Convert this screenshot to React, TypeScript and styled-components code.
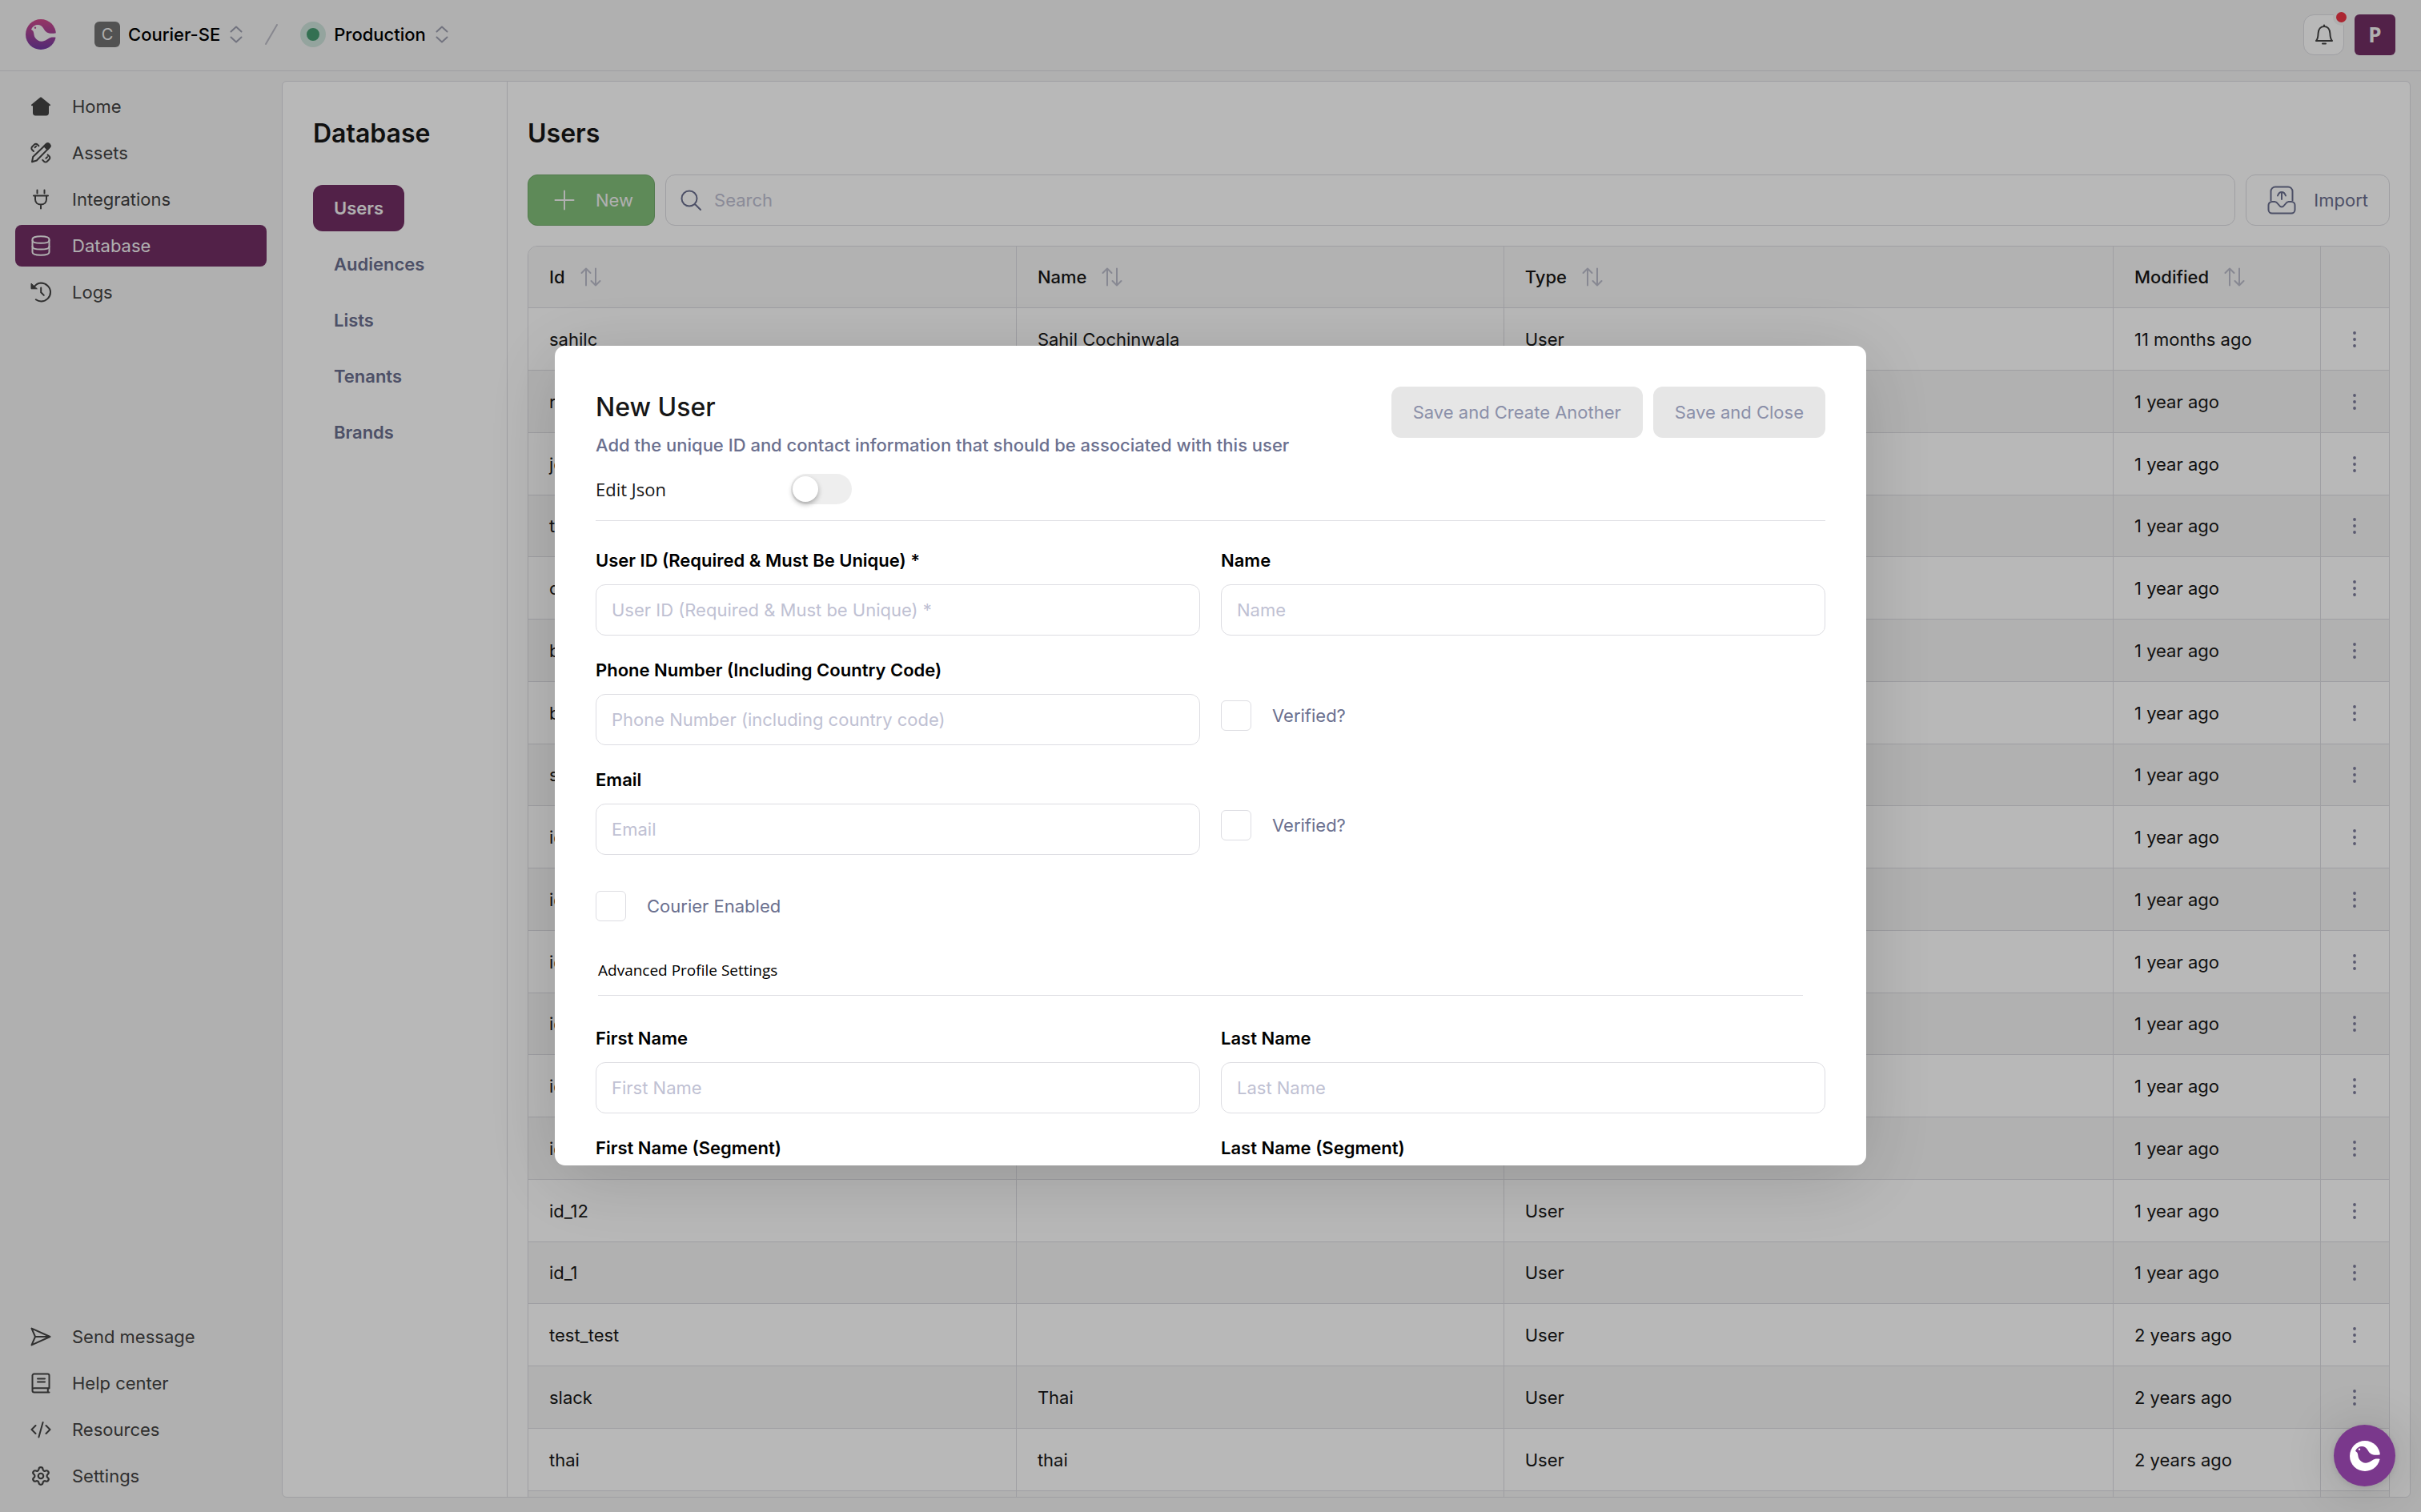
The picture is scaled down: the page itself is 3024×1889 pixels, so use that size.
import React, { useId } from "react";
import styled, { createGlobalStyle, css } from "styled-components";
import { Settings } from "lucide-react";

const color = {
  page: "#f4f4f4",
  surface: "#ffffff",
  stripe: "#f7f7f7",
  line: "#dddde2",
  ink: "#171717",
  menu: "#434343",
  muted: "#6b708f",
  placeholder: "#bfc1d3",
  brand: "#722e65",
  green: "#83bf7b",
};

const GlobalStyle = createGlobalStyle`
  *, *::before, *::after { box-sizing: border-box; }
  body {
    margin: 0;
    background: ${color.page};
    color: ${color.ink};
    font-family: Inter, "Liberation Sans", sans-serif;
    font-size: 22px;
    line-height: 32px;
  }
  button, input { font: inherit; color: inherit; }
  button { cursor: pointer; }
  a { color: inherit; text-decoration: none; }
  svg { display: block; flex: none; }
`;

/* ---------- icons ---------- */

const Glyph = styled.svg`
  fill: none;
  stroke: currentColor;
  stroke-width: 2;
  stroke-linecap: round;
  stroke-linejoin: round;
`;

const HomeIcon = () => (
  <Glyph width="26" height="26" viewBox="0 0 26 26">
    <path d="M12.4 1.6a1 1 0 0 1 1.2 0l11 8.8c.8.7.4 1.8-.6 1.8h-1V21a3.4 3.4 0 0 1-3.4 3.4H6.4A3.4 3.4 0 0 1 3 21v-8.800H2c-1 0-1.400-1.100-.6-1.800z" fill="currentColor" stroke="none" />
  </Glyph>
);

const AssetsIcon = () => (
  <Glyph width="26" height="26" viewBox="0 0 26 26">
    <path d="M2 24.300l1.200-6.300L19.500 2.300c1.200-1.100 3-1.100 4.100 0 1.100 1.200 1.100 3 0 4.100L7.800 22.500z" />
    <path d="M17.200 4.600l2.300-2.300c1.200-1.100 3-1.100 4.100 0 1.100 1.200 1.100 3 0 4.100l-2.300 2.400z" fill="currentColor" />
    <path d="M4 11L2.200 9.200a2.800 2.800 0 0 1 0-4L4.800 2.600a2.800 2.800 0 0 1 4 0l1.600 1.600M5.600 6.200l1.600-1.600" />
    <path d="M21.600 15.400l1.900 1.800a2.600 2.600 0 0 1 0 3.800l-2.700 2.700a2.600 2.600 0 0 1-3.800 0l-1.800-1.800M19.400 19.800l1.700-1.700" />
  </Glyph>
);

const PlugIcon = () => (
  <Glyph width="26" height="26" viewBox="0 0 26 26">
    <path d="M8.500 1.500v4M17.500 1.500v4M4 8.500h18M6 8.500v4.500c0 4 3 6.500 7 6.500s7-2.500 7-6.500V8.500M13 19.500v5" />
  </Glyph>
);

const DatabaseIcon = () => (
  <Glyph width="26" height="26" viewBox="0 0 26 26">
    <path d="M2.500 5c0-2.200 3.500-3.800 10.500-3.800S23.500 2.800 23.500 5v16c0 2.200-3.500 3.800-10.500 3.800S2.500 23.200 2.500 21z" />
    <path d="M2.500 6.200c0 2 3.500 3.600 10.500 3.600s10.500-1.600 10.500-3.600M2.500 14c0 2 3.500 3.600 10.500 3.600S23.500 16 23.500 14" />
  </Glyph>
);

const LogsIcon = () => (
  <Glyph width="26" height="26" viewBox="0 0 26 26">
    <path d="M4.200 7.200A11.600 11.600 0 0 1 13 1.600C19.600 1.600 25 6.600 25 13s-5.200 11.500-11.600 11.500c-2.500 0-4.600-.7-6.600-2.200" />
    <path d="M13.200 7.500v5.800l3.600 3.600" />
    <path d="M1 2.500v6.300h7z" fill="currentColor" strokeWidth="1" />
  </Glyph>
);

const SendIcon = () => (
  <Glyph width="26" height="26" viewBox="0 0 26 26">
    <path d="M1.500 2.600L24.500 13 1.500 23.400 6 13zM6 13h18" />
  </Glyph>
);

const BookIcon = () => (
  <Glyph width="26" height="26" viewBox="0 0 26 26">
    <path d="M23.500 19.500V3.600a2 2 0 0 0-2-2H4.500a2 2 0 0 0-2 2v18.600c0 1.300 1 2.300 2.300 2.300h18.700M2.500 20.600c0-.800 1-1.400 2.300-1.400h18.200M21.800 19.500v4.800M9 7.500h9M9 11.500h9" />
  </Glyph>
);

const CodeIcon = () => (
  <Glyph width="26" height="26" viewBox="0 0 26 26">
    <path d="M6.500 8L1.500 13l5 5M19.500 8l5 5-5 5M15.600 4l-5.200 18.500" />
  </Glyph>
);

const BellIcon = () => (
  <Glyph width="24" height="26" viewBox="0 0 24 26">
    <path d="M2 21h20c-2-2-2.400-4-2.600-9.200C19.200 6.600 16.400 3 12 3S4.800 6.600 4.600 11.800C4.400 17 4 19 2 21zM12 1.600V3M10 24.500h4" />
  </Glyph>
);

const SelectorIcon = () => (
  <Glyph width="16" height="22" viewBox="0 0 16 22">
    <path d="M1.500 7.500L8 1.500l6.500 6M1.500 14.500l6.500 6 6.500-6" />
  </Glyph>
);

const SlashIcon = () => (
  <Glyph width="18" height="26" viewBox="0 0 18 26">
    <path d="M2 25L16 1" />
  </Glyph>
);

const PlusIcon = () => (
  <Glyph width="26" height="26" viewBox="0 0 26 26">
    <path d="M13 1.500v23M1.500 13h23" />
  </Glyph>
);

const SearchIcon = () => (
  <Glyph width="26" height="26" viewBox="0 0 26 26">
    <path d="M11 20.500a9.500 9.500 0 1 0 0-19 9.500 9.500 0 0 0 0 19zM18 18l7 7" />
  </Glyph>
);

const ImportIcon = () => (
  <Glyph width="36" height="36" viewBox="0 0 36 36">
    <path d="M4.500 18.500V7a5.500 5.500 0 0 1 5.500-5.500h16A5.500 5.500 0 0 1 31.500 7v11.500M18 17V8M13 12.500C14 9.500 16 8 18 8s4 1.500 5 4.500" />
    <path d="M6 20h3.500c4 0 4.500 6.500 8.500 6.500s4.500-6.500 8.500-6.500H30a4.500 4.500 0 0 1 4.500 4.500V30a4.500 4.500 0 0 1-4.500 4.500H6A4.500 4.500 0 0 1 1.500 30v-5.500A4.500 4.500 0 0 1 6 20z" />
  </Glyph>
);

const SortIcon = () => (
  <Glyph width="26" height="24" viewBox="0 0 26 24">
    <path d="M7 22.500V2M1.500 7L7 1.500 12.500 7M19 1.500V22M13.500 17l5.500 5.500 5.500-5.500" />
  </Glyph>
);

const DotsIcon = () => (
  <Glyph width="6" height="22" viewBox="0 0 6 22">
    <g fill="currentColor" stroke="none">
      <circle cx="3" cy="3" r="1.900" />
      <circle cx="3" cy="11" r="1.900" />
      <circle cx="3" cy="19" r="1.900" />
    </g>
  </Glyph>
);

function BirdLogo({ fill }: { fill?: string }) {
  const id = useId();
  return (
    <svg width="38" height="38" viewBox="0 0 114 114" role="img" aria-label="Courier">
      <defs>
        <linearGradient id={`${id}g`} x1="0" y1="0" x2="0" y2="1">
          <stop offset="0" stopColor="#d04a8c" />
          <stop offset="1" stopColor="#723aa2" />
        </linearGradient>
        <mask id={`${id}m`}>
          <rect width="114" height="114" fill="#fff" />
          <path
            d="M21 38C26 27 35 21 46 21c8 0 15 4 20 12 6 11 13 19 27 20 8 1 15 0 24-2v19c-9-3-17-3-24-1-11 4-18 14-33 14-10 0-18-6-23-12-7-9-5-20-9-27z"
            fill="#000"
          />
          <circle cx="36" cy="32" r="3.500" fill="#fff" />
        </mask>
      </defs>
      <circle cx="57" cy="57" r="57" fill={fill ?? `url(#${id}g)`} mask={`url(#${id}m)`} />
    </svg>
  );
}

/* ---------- shell ---------- */

const Shell = styled.div`
  display: flex;
  flex-direction: column;
  height: 100vh;
  overflow: hidden;
`;

const TopBar = styled.header`
  display: flex;
  align-items: center;
  height: 89px;
  padding: 0 32px 2px;
  border-bottom: 1px solid ${color.line};
`;

const Switcher = styled.button`
  display: flex;
  align-items: center;
  gap: 10px;
  padding: 0;
  border: 0;
  background: none;
  color: #000;
  font-weight: 500;
  svg { margin-left: 2px; color: #9ea0b0; }
`;

const Crumbs = styled.div`
  display: flex;
  align-items: center;
  gap: 27px;
  margin-left: 48px;
  > svg { color: #bcbcc6; }
`;

const Initial = styled.span`
  width: 32px;
  height: 32px;
  border-radius: 6px;
  background: #727272;
  color: #f4f4f4;
  font-size: 20px;
  font-weight: 400;
  text-align: center;
`;

const StatusDot = styled.span`
  width: 32px;
  height: 32px;
  border: 8px solid #cee3db;
  border-radius: 50%;
  background: #489c72;
`;

const TopActions = styled.div`
  display: flex;
  gap: 13px;
  margin-left: auto;
`;

const BellButton = styled.button`
  position: relative;
  display: grid;
  place-items: center;
  width: 51px;
  height: 51px;
  padding: 0;
  border: 1px solid ${color.line};
  border-radius: 13px;
  background: ${color.surface};
  color: ${color.menu};
`;

const Unread = styled.span`
  position: absolute;
  top: -8px;
  right: -8px;
  width: 21px;
  height: 21px;
  border: 4px solid ${color.page};
  border-radius: 50%;
  background: #ee3545;
`;

const Avatar = styled.button`
  width: 51px;
  height: 51px;
  padding: 0;
  border: 0;
  border-radius: 6px;
  background: ${color.brand};
  color: #f4f4f4;
  font: 700 26px/51px "Open Sans", sans-serif;
`;

const Body = styled.div`
  display: flex;
  flex: 1;
  min-height: 0;
`;

const Sidebar = styled.nav`
  display: flex;
  flex: none;
  flex-direction: column;
  justify-content: space-between;
  width: 352px;
  padding: 18px 19px 19px;
`;

const MenuGroup = styled.div`
  display: grid;
  gap: 6px;
`;

const MenuLink = styled.a<{ $active?: boolean }>`
  display: flex;
  align-items: center;
  gap: 26px;
  height: 52px;
  padding: 0 19px;
  border-radius: 8px;
  color: ${color.menu};
  ${(p) => p.$active && css`
    background: ${color.brand};
    color: #f4f4f4;
  `}
`;

const Panel = styled.div`
  display: flex;
  flex: 1;
  min-width: 0;
  margin: 12px 13px 18px 0;
  border: 1px solid ${color.line};
  border-radius: 6px;
  background: ${color.surface};
  overflow: hidden;
`;

const SubNav = styled.nav`
  flex: none;
  width: 281px;
  padding: 45px 38px;
  border-right: 1px solid ${color.line};
`;

const Heading = styled.h1`
  margin: 0;
  font-size: 32px;
  font-weight: 600;
  line-height: 40px;
`;

const SubLinks = styled.div`
  display: grid;
  justify-items: start;
  gap: 12px;
  margin-top: 44px;
`;

const SubLink = styled.a<{ $active?: boolean }>`
  padding: 13px 26px;
  border-radius: 12px;
  color: ${color.muted};
  font-weight: 600;
  ${(p) => p.$active && css`
    background: ${color.brand};
    color: #f4f4f4;
  `}
`;

const Main = styled.main`
  flex: 1;
  min-width: 0;
  padding: 45px 25px 0;
`;

const Toolbar = styled.div`
  display: flex;
  gap: 13px;
  margin: 31px 0 25px;
`;

const ToolButton = styled.button<{ $primary?: boolean }>`
  display: flex;
  align-items: center;
  gap: 22px;
  height: 64px;
  padding: 0 26px;
  border: 1px solid ${color.line};
  border-radius: 12px;
  background: ${color.surface};
  color: ${color.muted};
  ${(p) => p.$primary && css`
    gap: 26px;
    padding: 0 26px 0 32px;
    border-color: #74ab6c;
    background: ${color.green};
    color: #f4f4f4;
  `}
`;

const SearchBox = styled.label`
  display: flex;
  flex: 1;
  align-items: center;
  gap: 16px;
  height: 64px;
  padding: 0 18px;
  border: 1px solid ${color.line};
  border-radius: 12px;
  color: ${color.muted};
`;

const SearchInput = styled.input`
  flex: 1;
  padding: 0;
  border: 0;
  outline: 0;
  background: none;
  &::placeholder { color: ${color.placeholder}; opacity: 1; }
`;

/* ---------- table ---------- */

const TableFrame = styled.div`
  border: 1px solid ${color.line};
  border-radius: 12px 12px 0 0;
  overflow: hidden;
`;

const DataTable = styled.table`
  width: 100%;
  border-collapse: separate;
  border-spacing: 0;
  table-layout: fixed;
`;

const Cell = styled.td`
  height: inherit;
  padding: 0 26px;
  border-bottom: 1px solid ${color.line};
  border-left: 1px solid ${color.line};
  text-align: left;
  &:first-child { border-left: 0; }
`;

const HeadCell = styled(Cell).attrs({ as: "th" })`
  height: 77px;
  background: ${color.stripe};
  font-weight: 500;
`;

const Row = styled.tr`
  height: 78px;
  &:nth-child(4n) { height: 77px; }
  &:nth-child(even) { background: #f6f6f6; }
`;

const SortButton = styled.button`
  display: flex;
  align-items: center;
  gap: 19px;
  padding: 0;
  border: 0;
  background: none;
  font-weight: 500;
  svg { color: #bcbdcb; }
`;

const RowMenu = styled.button`
  display: grid;
  place-items: center;
  width: 32px;
  height: 32px;
  padding: 0;
  border: 0;
  background: none;
  color: #7c7c9a;
`;

const Columns = {
  Wide: styled.col`width: 26.2%;`,
  Modified: styled.col`width: 259px;`,
  Menu: styled.col`width: 86px;`,
};

/* ---------- dialog ---------- */

const Overlay = styled.div`
  position: fixed;
  inset: 0;
  display: grid;
  place-items: center;
  padding-bottom: 1px;
  background: rgba(0, 0, 0, 0.28);
`;

const Dialog = styled.section`
  width: min(1638px, 94vw);
  max-height: min(1024px, 94vh);
  padding: 51px;
  border-radius: 13px;
  background: ${color.surface};
  box-shadow: 0 16px 96px rgba(0, 0, 0, 0.16);
  overflow-y: auto;
  scrollbar-width: none;
`;

const DialogHead = styled.div`
  display: flex;
  align-items: flex-start;
  justify-content: space-between;
`;

const DialogTitle = styled.h2`
  margin: 6px 0 11px;
  font-size: 32px;
  font-weight: 500;
  line-height: 40px;
`;

const Lead = styled.p`
  margin: 0;
  color: ${color.muted};
  font-weight: 500;
`;

const DialogActions = styled.div`
  display: flex;
  gap: 13px;
`;

const SaveButton = styled.button`
  height: 64px;
  padding: 0 27px;
  border: 0;
  border-radius: 12px;
  background: #e6e6e6;
  color: #8b90a9;
  cursor: default;
`;

const JsonRow = styled.div`
  display: flex;
  align-items: center;
  margin-top: 20px;
  padding-bottom: 20px;
  border-bottom: 1px solid ${color.line};
  font-family: "Open Sans", sans-serif;
`;

const JsonLabel = styled.label`
  width: 244px;
`;

const Toggle = styled.input`
  appearance: none;
  width: 76px;
  height: 38px;
  margin: 0;
  padding: 3px 2px;
  border-radius: 19px;
  background: #eeeeee;
  &::before {
    content: "";
    display: block;
    width: 32px;
    height: 32px;
    border-radius: 50%;
    background: #fff;
    box-shadow: 0 3px 6px rgba(0, 0, 0, 0.3);
  }
  &:checked { background: ${color.green}; }
  &:checked::before { margin-left: auto; }
`;

const FormGrid = styled.div<{ $spaced?: boolean }>`
  display: grid;
  grid-template-columns: 1fr 1fr;
  gap: 28px 26px;
  margin-top: ${(p) => (p.$spaced ? 38 : 34)}px;
`;

const FieldBox = styled.div`
  display: grid;
  gap: 14px;
`;

const FieldLabel = styled.label`
  color: #000;
  font-weight: 600;
  line-height: 31px;
`;

const TextInput = styled.input`
  width: 100%;
  height: 64px;
  padding: 0 19px;
  border: 1px solid ${color.line};
  border-radius: 12px;
  background: ${color.surface};
  &::placeholder { color: ${color.placeholder}; opacity: 1; }
`;

const CheckLabel = styled.label<{ $inline?: boolean }>`
  display: flex;
  align-items: center;
  align-self: end;
  justify-self: start;
  gap: 26px;
  margin-bottom: ${(p) => (p.$inline ? 18 : 0)}px;
  color: ${color.muted};
`;

const CheckBox = styled.input`
  appearance: none;
  width: 38px;
  height: 38px;
  margin: 0;
  border: 1px solid ${color.line};
  border-radius: 6px;
  background: ${color.surface};
  &:checked { background: ${color.brand}; }
`;

const EnabledRow = styled.div`
  display: flex;
  margin-top: 45px;
`;

const SectionTitle = styled.h3`
  margin: 48px 28px 0 3px;
  padding-bottom: 18px;
  border-bottom: 1px solid ${color.line};
  color: #000;
  font: 500 19px/26px "Open Sans", sans-serif;
`;

const ChatButton = styled.button`
  position: fixed;
  right: 32px;
  bottom: 32px;
  display: grid;
  place-items: center;
  width: 77px;
  height: 77px;
  padding: 0;
  border: 0;
  border-radius: 50%;
  background: #7a388c;
  box-shadow: 0 4px 64px rgba(0, 0, 0, 0.18), 0 2px 10px rgba(0, 0, 0, 0.1);
`;

/* ---------- content ---------- */

const primaryMenu = [
  { label: "Home", icon: <HomeIcon /> },
  { label: "Assets", icon: <AssetsIcon /> },
  { label: "Integrations", icon: <PlugIcon /> },
  { label: "Database", icon: <DatabaseIcon />, active: true },
  { label: "Logs", icon: <LogsIcon /> },
];

const secondaryMenu = [
  { label: "Send message", icon: <SendIcon /> },
  { label: "Help center", icon: <BookIcon /> },
  { label: "Resources", icon: <CodeIcon /> },
  { label: "Settings", icon: <Settings size={26} strokeWidth={2} /> },
];

const users = [
  ["sahilc", "Sahil Cochinwala", "11 months ago"],
  ["r", "", "1 year ago"],
  ["jo", "", "1 year ago"],
  ["t", "", "1 year ago"],
  ["c", "", "1 year ago"],
  ["b", "", "1 year ago"],
  ["b", "", "1 year ago"],
  ["s", "", "1 year ago"],
  ["id", "", "1 year ago"],
  ["id", "", "1 year ago"],
  ["id", "", "1 year ago"],
  ["id", "", "1 year ago"],
  ["id", "", "1 year ago"],
  ["id", "", "1 year ago"],
  ["id_12", "", "1 year ago"],
  ["id_1", "", "1 year ago"],
  ["test_test", "", "2 years ago"],
  ["slack", "Thai", "2 years ago"],
  ["thai", "thai", "2 years ago"],
  ["", "", ""],
];

function Menu({ items }: { items: { label: string; icon: React.ReactNode; active?: boolean }[] }) {
  return (
    <MenuGroup>
      {items.map((item) => (
        <MenuLink key={item.label} href="#" $active={item.active}>
          {item.icon}
          {item.label}
        </MenuLink>
      ))}
    </MenuGroup>
  );
}

function Field({ label, placeholder = label }: { label: string; placeholder?: string }) {
  const id = useId();
  return (
    <FieldBox>
      <FieldLabel htmlFor={id}>{label}</FieldLabel>
      <TextInput id={id} placeholder={placeholder} />
    </FieldBox>
  );
}

function Check({ label, inline }: { label: string; inline?: boolean }) {
  return (
    <CheckLabel $inline={inline}>
      <CheckBox type="checkbox" />
      {label}
    </CheckLabel>
  );
}

function UsersTable() {
  return (
    <TableFrame>
      <DataTable>
        <colgroup>
          <Columns.Wide />
          <Columns.Wide />
          <col />
          <Columns.Modified />
          <Columns.Menu />
        </colgroup>
        <thead>
          <tr>
            {["Id", "Name", "Type", "Modified"].map((name) => (
              <HeadCell key={name}>
                <SortButton>
                  {name}
                  <SortIcon />
                </SortButton>
              </HeadCell>
            ))}
            <HeadCell />
          </tr>
        </thead>
        <tbody>
          {users.map(([id, name, modified], i) => (
            <Row key={i}>
              <Cell>{id}</Cell>
              <Cell>{name}</Cell>
              <Cell>{id && "User"}</Cell>
              <Cell>{modified}</Cell>
              <Cell>
                {id && (
                  <RowMenu aria-label="Row actions">
                    <DotsIcon />
                  </RowMenu>
                )}
              </Cell>
            </Row>
          ))}
        </tbody>
      </DataTable>
    </TableFrame>
  );
}

function NewUserDialog() {
  return (
    <Overlay>
      <Dialog role="dialog" aria-modal="true" aria-labelledby="new-user-title">
        <DialogHead>
          <div>
            <DialogTitle id="new-user-title">New User</DialogTitle>
            <Lead>Add the unique ID and contact information that should be associated with this user</Lead>
          </div>
          <DialogActions>
            <SaveButton type="button">Save and Create Another</SaveButton>
            <SaveButton type="button">Save and Close</SaveButton>
          </DialogActions>
        </DialogHead>
        <JsonRow>
          <JsonLabel htmlFor="edit-json">Edit Json</JsonLabel>
          <Toggle id="edit-json" type="checkbox" role="switch" />
        </JsonRow>
        <FormGrid>
          <Field
            label="User ID (Required & Must Be Unique) *"
            placeholder="User ID (Required & Must be Unique) *"
          />
          <Field label="Name" />
          <Field
            label="Phone Number (Including Country Code)"
            placeholder="Phone Number (including country code)"
          />
          <Check label="Verified?" inline />
          <Field label="Email" />
          <Check label="Verified?" inline />
        </FormGrid>
        <EnabledRow>
          <Check label="Courier Enabled" />
        </EnabledRow>
        <SectionTitle>Advanced Profile Settings</SectionTitle>
        <FormGrid $spaced>
          <Field label="First Name" />
          <Field label="Last Name" />
          <Field label="First Name (Segment)" />
          <Field label="Last Name (Segment)" />
        </FormGrid>
      </Dialog>
    </Overlay>
  );
}

export default function App() {
  return (
    <>
      <GlobalStyle />
      <Shell>
        <TopBar>
          <BirdLogo />
          <Crumbs>
            <Switcher>
              <Initial>C</Initial>
              Courier-SE
              <SelectorIcon />
            </Switcher>
            <SlashIcon />
            <Switcher>
              <StatusDot />
              Production
              <SelectorIcon />
            </Switcher>
          </Crumbs>
          <TopActions>
            <BellButton aria-label="Notifications">
              <BellIcon />
              <Unread />
            </BellButton>
            <Avatar>P</Avatar>
          </TopActions>
        </TopBar>
        <Body>
          <Sidebar>
            <Menu items={primaryMenu} />
            <Menu items={secondaryMenu} />
          </Sidebar>
          <Panel>
            <SubNav>
              <Heading>Database</Heading>
              <SubLinks>
                {["Users", "Audiences", "Lists", "Tenants", "Brands"].map((name) => (
                  <SubLink key={name} href="#" $active={name === "Users"}>
                    {name}
                  </SubLink>
                ))}
              </SubLinks>
            </SubNav>
            <Main>
              <Heading as="h2">Users</Heading>
              <Toolbar>
                <ToolButton $primary>
                  <PlusIcon />
                  New
                </ToolButton>
                <SearchBox>
                  <SearchIcon />
                  <SearchInput type="search" placeholder="Search" aria-label="Search" />
                </SearchBox>
                <ToolButton>
                  <ImportIcon />
                  Import
                </ToolButton>
              </Toolbar>
              <UsersTable />
            </Main>
          </Panel>
        </Body>
      </Shell>
      <NewUserDialog />
      <ChatButton aria-label="Open chat">
        <BirdLogo fill="#fff" />
      </ChatButton>
    </>
  );
}
